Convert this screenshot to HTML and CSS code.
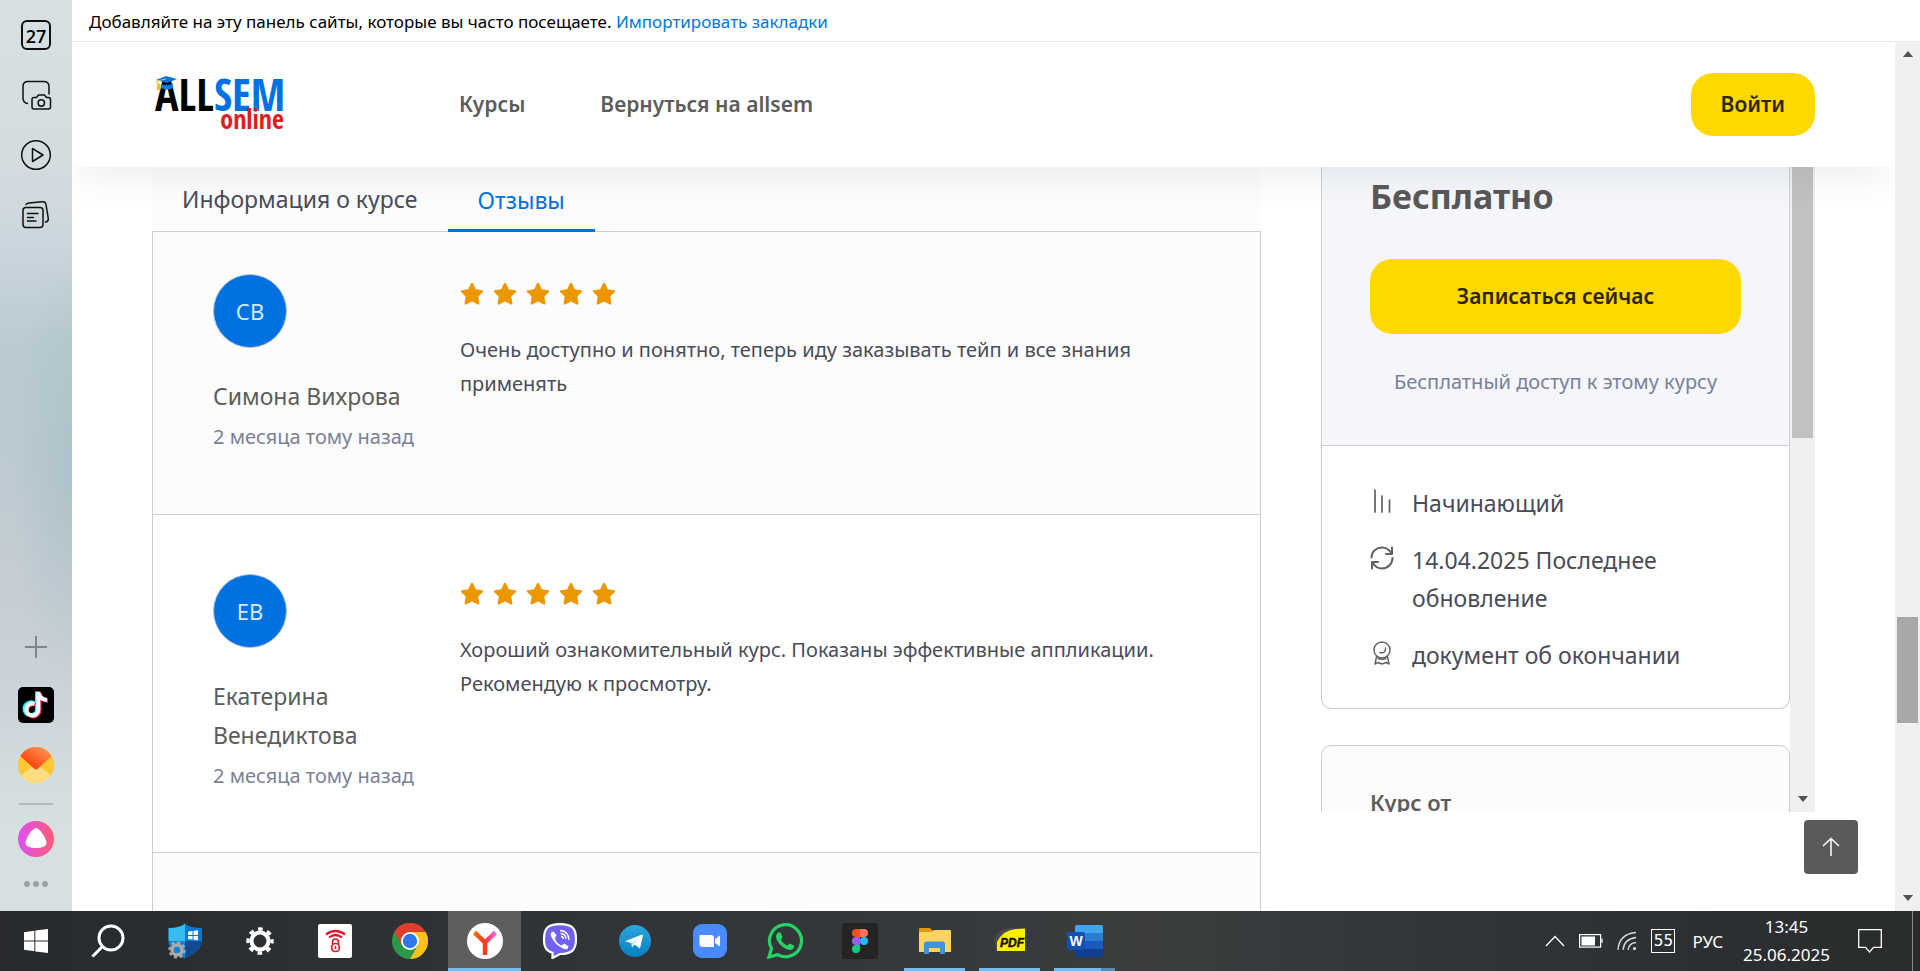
FILE: index.html
```html
<!DOCTYPE html>
<html lang="ru">
<head>
<meta charset="utf-8">
<title>ALLSEM online — Отзывы</title>
<link rel="stylesheet" href="styles.css">
</head>
<body>
<div class="desktop">
  <div class="browser">
    <aside class="sidebar" aria-label="Панель браузера">
      <button class="side-btn" aria-label="Вкладки"><span class="tab-count">27</span></button>
      <button class="side-btn" aria-label="Скриншот">
        <svg width="32" height="32" viewBox="0 0 32 32" fill="none" stroke="#111" stroke-width="1.5" stroke-linecap="round" stroke-linejoin="round"><path d="M7.5 24.5C4.500 24 3 22 3 19V7.500C3 4.500 5 2.500 8 2.500H23.500C27 2.500 29 4.500 29 7.500V15"/><path d="M14 18.500H16.500L18.500 16H24.500L26.500 18.500H28.500A2 2 0 0 1 30.500 20.500V28A2 2 0 0 1 28.500 30H14A2 2 0 0 1 12 28V20.500A2 2 0 0 1 14 18.500Z"/><circle cx="21.300" cy="24" r="3.200"/></svg>
      </button>
      <button class="side-btn" aria-label="Видео">
        <svg width="32" height="32" viewBox="0 0 32 32" fill="none" stroke="#111" stroke-width="1.5" stroke-linejoin="round"><circle cx="16" cy="16" r="14.300"/><path d="M12.500 9.500V22.500L23 16Z"/></svg>
      </button>
      <button class="side-btn" aria-label="Коллекции">
        <svg width="32" height="32" viewBox="0 0 32 32" fill="none" stroke="#111" stroke-width="1.5" stroke-linecap="round" stroke-linejoin="round"><rect x="3" y="8.500" width="20" height="20" rx="3"/><path d="M6 5.500C6.500 4.500 7.500 4.300 9 4.100L22 2.800C24.500 2.600 25.700 3.500 26 5.500L28.300 19.500C28.500 21.500 27.500 22.800 25.500 23"/><path d="M7.500 14.500H18M7.500 18.500H13.500M7.500 22H16"/></svg>
      </button>
      <div class="side-bottom">
        <button class="side-btn" aria-label="Добавить"><svg width="24" height="24" viewBox="0 0 24 24" stroke="#7e888b" stroke-width="2"><path d="M12 1V23M1 12H23"/></svg></button>
        <button class="side-btn" aria-label="TikTok">
          <svg width="36" height="36" viewBox="0 0 36 36"><rect width="36" height="36" rx="5"/><g fill="none" stroke-width="4"><path stroke="#25f4ee" d="M16 16A6.500 6.500 0 1 0 19 24V4.500"/><path stroke="#fe2c55" d="M17.500 17.500A6.200 6.200 0 1 0 21.500 23.500V6C22 10.500 25 13.500 30 13.800"/><path stroke="#fff" d="M16.500 17A6 6 0 1 0 20.300 22.700V5C20.800 9.500 24 12.500 29 12.900"/></g></svg>
        </button>
        <button class="side-btn" aria-label="Почта">
          <svg width="36" height="36" viewBox="0 0 36 36"><defs><clipPath id="mc"><circle cx="18" cy="18" r="18"/></clipPath><linearGradient id="mg" x1="0" y1="1" x2="1" y2="0"><stop offset=".3" stop-color="#ff4a12"/><stop offset="1" stop-color="#ffa665"/></linearGradient></defs><g clip-path="url(#mc)"><rect width="36" height="36" fill="#ffc832"/><path d="M0 31L18 16L36 31V36H0Z" fill="#ffdd80"/><path d="M0 7L16 21.500Q18 23.500 20 21.500L36 7V0H0Z" fill="url(#mg)"/></g></svg>
        </button>
        <hr class="side-line">
        <button class="side-btn" aria-label="Алиса">
          <svg width="36" height="36" viewBox="0 0 36 36"><defs><linearGradient id="ag"><stop stop-color="#dd50f0"/><stop offset="1" stop-color="#ff5a78"/></linearGradient></defs><circle cx="18" cy="18" r="18" fill="url(#ag)"/><path d="M18 7C21.500 7 28.500 17.500 28.500 22C28.500 25.500 24 27 18 27S7.500 25.500 7.500 22C7.500 17.500 14.500 7 18 7Z" fill="#fff"/></svg>
        </button>
        <button class="side-btn more" aria-label="Ещё"><svg width="24" height="6" viewBox="0 0 24 6" fill="#9ba1a3"><circle cx="3" cy="3" r="3"/><circle cx="12" cy="3" r="3"/><circle cx="21" cy="3" r="3"/></svg></button>
      </div>
    </aside>

    <div class="window">
      <div class="bookmarks">Добавляйте на эту панель сайты, которые вы часто посещаете. <a href="#">Импортировать закладки</a></div>
      <div class="viewport">
        <div class="page">
          <header class="header">
            <a class="logo" href="#" aria-label="ALLSEM online">
              <svg class="logo-cap" width="22" height="14" viewBox="0 0 22 14"><path d="M1 4L11 0L22 3L12 7Z" fill="#0071e3"/><path d="M6 8L12 9.500L18 7.500V12Q12 15 6 12Z" fill="#0a7be8"/><path d="M2 5V8M3 8L2 14H5V8Z" fill="#f5b82e" stroke="#f5b82e"/><path d="M2 5L11 3" stroke="#f5b82e"/></svg>
              <span class="logo-main">ALL<span class="logo-blue">SEM</span></span>
              <span class="logo-sub">online</span>
            </a>
            <nav class="nav"><a href="#">Курсы</a><a href="#">Вернуться на allsem</a></nav>
            <button class="btn btn-login">Войти</button>
          </header>
          <main class="content">
            <section class="course">
              <div class="tabs" role="tablist">
                <button class="tab" role="tab">Информация о курсе</button>
                <button class="tab tab-active" role="tab" aria-selected="true">Отзывы</button>
              </div>
              <div class="reviews">
                <article class="review review-first">
                  <div class="author"><div class="avatar">СВ</div><div class="name">Симона Вихрова</div><div class="time">2 месяца тому назад</div></div>
                  <div class="review-body"><svg class="stars" width="156" height="24" viewBox="0 0 156 24" fill="#ed9700"><defs><path id="star" d="M12 .8Q12.700 .8 13.200 1.800L15.800 7.300L22 8.200Q24 8.700 22.700 10.200L18.300 14.600L19.400 21.200Q19.500 23 17.900 22.400L12 19.400L6.100 22.400Q4.500 23 4.600 21.200L5.700 14.600L1.300 10.200Q0 8.700 2 8.200L8.200 7.300L10.800 1.800Q11.300 .8 12 .8Z"/></defs><use href="#star"/><use href="#star" x="33"/><use href="#star" x="66"/><use href="#star" x="99"/><use href="#star" x="132"/></svg>
                  <p>Очень доступно и понятно, теперь иду заказывать тейп и все знания применять</p></div>
                </article>
                <article class="review">
                  <div class="author"><div class="avatar">ЕВ</div><div class="name">Екатерина Венедиктова</div><div class="time">2 месяца тому назад</div></div>
                  <div class="review-body"><svg class="stars" width="156" height="24" viewBox="0 0 156 24" fill="#ed9700"><use href="#star"/><use href="#star" x="33"/><use href="#star" x="66"/><use href="#star" x="99"/><use href="#star" x="132"/></svg>
                  <p>Хороший ознакомительный курс. Показаны эффективные аппликации. Рекомендую к просмотру.</p></div>
                </article>
                <article class="review"></article>
              </div>
            </section>
            <aside class="panel">
              <div class="panel-cards">
                <div class="card">
                  <div class="card-top">
                    <div class="price">Бесплатно</div>
                    <button class="btn btn-enroll">Записаться сейчас</button>
                    <div class="access">Бесплатный доступ к этому курсу</div>
                  </div>
                  <ul class="meta">
                    <li><svg width="24" height="24" viewBox="0 0 24 24" fill="none" stroke="#5f6064" stroke-width="1.700" stroke-linecap="round"><path d="M5 1V23M12 7V23M19.500 11V23"/></svg><span>Начинающий</span></li>
                    <li><svg width="24" height="24" viewBox="0 0 24 24" fill="none" stroke="#5f6064" stroke-width="2" stroke-linecap="round" stroke-linejoin="round"><path d="M1.500 11.500C1.500 5.500 6.500 1.500 12 1.500C16.500 1.500 19.500 4 21.500 7.500M22 1.500V8H16M22.500 12C22.500 18 17.500 22.500 12 22.500C7.500 22.500 4.500 20 2.500 16.500M2 22.500V16H8"/></svg><span>14.04.2025 Последнее обновление</span></li>
                    <li><svg width="24" height="24" viewBox="0 0 24 24" fill="none" stroke="#5f6064" stroke-width="1.400" stroke-linecap="round" stroke-linejoin="round"><circle cx="12" cy="9" r="8"/><path d="M15.500 7C16 10.500 13.500 12.500 10 11.500M6.500 15.500L5 23L8 21.500L12 23L16 21.500L19 23L17.500 15.500M8 17.500Q12 19 16 17.500"/></svg><span>документ об окончании</span></li>
                  </ul>
                </div>
                <div class="card card-next"><div class="from">Курс от</div></div>
              </div>
              <div class="scroll scroll-inner"><i class="thumb-inner"></i><i class="arrow-down"></i></div>
            </aside>
          </main>
          <button class="to-top" aria-label="Наверх"><svg width="18" height="20" viewBox="0 0 18 20" fill="none" stroke="#fff" stroke-width="1.5"><path d="M9 1.500V19M1 9L9 1.500L17 9"/></svg></button>
        </div>
        <div class="scroll scroll-page"><i class="arrow-up"></i><i class="thumb-page"></i><i class="arrow-down"></i></div>
      </div>
    </div>
  </div>

  <footer class="taskbar">
    <button class="task task-sys" aria-label="Пуск"><svg width="24" height="24" viewBox="0 0 24 24" fill="#fff"><path d="M0 3.300L10.300 1.800V11.500H0ZM11.300 1.600L24 0V11.500H11.300ZM0 12.500H10.300V22.300L0 20.800ZM11.300 12.500H24V24L11.300 22.400Z"/></svg></button>
    <button class="task task-sys" aria-label="Поиск"><svg width="34" height="34" viewBox="0 0 34 34" fill="none" stroke="#fff" stroke-width="3"><circle cx="20" cy="14" r="12"/><path d="M11.500 22.500L1.500 32.500"/></svg></button>
    <div class="apps">
      <button class="task" aria-label="Безопасность"><svg width="36" height="36" viewBox="0 0 36 36"><path d="M18 .5C14 4 8 5 1.500 5V18H18Z" fill="#33bdf0"/><path d="M18 .5C22 4 28 5 35 5V18H18Z" fill="#0a78d4"/><path d="M1.500 18C2 26 9 32 18 35.500V18Z" fill="#1183d9"/><path d="M35 18C34.500 26 27 32 18 35.500V18Z" fill="#114b92"/><path d="M21 8.700L25.500 8V12H21ZM26.500 7.900L31 7.300V12H26.500ZM21 13H25.500V16.500L21 16ZM26.500 13H31V17.200L26.500 16.700Z" fill="#fff"/><circle cx="10" cy="27" r="7.500" fill="none" stroke="#a8a8a8" stroke-width="2.500" stroke-dasharray="3 2.900"/><circle cx="10" cy="27" r="5" fill="none" stroke="#aaa" stroke-width="3.500"/></svg></button>
      <button class="task" aria-label="Параметры"><svg width="30" height="30" viewBox="0 0 30 30" fill="none" stroke="#fff"><circle cx="15" cy="15" r="8.500" stroke-width="4"/><circle cx="15" cy="15" r="12" stroke-width="3.400" stroke-dasharray="4.700 4.720" stroke-dashoffset="2.300"/></svg></button>
      <button class="task" aria-label="VPN"><svg width="34" height="34" viewBox="0 0 34 34"><rect width="34" height="34" rx="2" fill="#fff"/><g fill="none" stroke="#e3142b" stroke-width="2.200"><path d="M8 10.500Q17.500 3.500 27 10.500M11 13.500Q17.500 8.500 24 13.500"/><rect x="13.700" y="19.500" width="7.600" height="8" rx="3.500" stroke-width="1.700"/><path d="M14.500 20V18A3 3 0 0 1 20.500 18V20M17.500 22V25" stroke-width="1.600"/></g></svg></button>
      <button class="task" aria-label="Chrome"><svg width="36" height="36" viewBox="0 0 36 36"><circle cx="18" cy="18" r="18" fill="#2b9a48"/><path d="M2.400 9A18 18 0 0 1 33.600 9L18 9L10.200 22.500Z" fill="#e33b2e"/><path d="M33.600 9A18 18 0 0 1 18 36L25.800 22.500L18 9Z" fill="#fcc21b"/><circle cx="18" cy="18" r="9" fill="#fff"/><circle cx="18" cy="18" r="7.200" fill="#2f76ea"/></svg></button>
      <button class="task task-current" aria-label="Яндекс Браузер"><svg width="36" height="36" viewBox="0 0 36 36"><defs><linearGradient id="yg"><stop stop-color="#ff6a00"/><stop offset=".5" stop-color="#f8382a"/><stop offset="1" stop-color="#ff60e8"/></linearGradient></defs><circle cx="18" cy="18" r="18" fill="#fff"/><path d="M7.500 9.500L18 19.500L28.500 9.500" stroke="url(#yg)" stroke-width="4.500" fill="none"/><path d="M18 18V32" stroke="#f83c22" stroke-width="4.500"/></svg></button>
      <button class="task" aria-label="Viber"><svg width="36" height="36" viewBox="0 0 36 36"><path d="M18 1.200C30 1.200 34 5 34 16S30 31 18 31L10.500 35V29.800C4 28 2 24 2 16C2 5 6 1.200 18 1.200Z" fill="#7360f2" stroke="#fff" stroke-width="2.200"/><path d="M11.500 8.500L14.500 12L13 15.500C14 19 16 21 19.500 22.500L22.500 20.500L26.500 23.500Q26 27 22.500 26C15 23 10 17.500 8.500 11Q9 8.500 11.500 8.500Z" fill="#fff"/><path d="M18 7.500Q26.500 8 27 17M18.500 10.500Q24 11 24 16M19 13.500Q21.500 13.500 21.500 16" fill="none" stroke="#fff" stroke-width="1.300"/></svg></button>
      <button class="task" aria-label="Telegram"><svg width="32" height="32" viewBox="0 0 32 32"><defs><linearGradient id="tg" x2="0" y2="1"><stop stop-color="#2ba6df"/><stop offset="1" stop-color="#087fc0"/></linearGradient></defs><circle cx="16" cy="16" r="16" fill="url(#tg)"/><path d="M6 16.200L23 9.600Q24 9.500 23.800 11L21 23.500L15.500 19.500L13 22.500L12.500 18.300Z" fill="#fff"/><path d="M12.500 18.300L20.500 12.500L14 19L13 22.500Z" fill="#b9d9ea"/></svg></button>
      <button class="task" aria-label="Zoom"><svg width="34" height="34" viewBox="0 0 34 34"><rect width="34" height="34" rx="9" fill="#4a8cff"/><path d="M6.500 11H18Q21 11 21 14V23H9.500Q6.500 23 6.500 20ZM22 15L27 11.500V22.500L22 19Z" fill="#fff"/></svg></button>
      <button class="task" aria-label="WhatsApp"><svg width="36" height="36" viewBox="0 0 36 36"><path d="M2 34L4.500 25.500A16 16 0 1 1 10.500 31.600Z" fill="none" stroke="#25d366" stroke-width="3.200"/><path d="M11 9.500H13.500L15.500 14L14 17C15.500 19.500 17.500 21.500 20.500 22.500L22.500 20.500L27 22.500Q27.500 26 23.500 27C18 27 9.500 20 9 14Q9 11 11 9.500Z" fill="#25d366"/></svg></button>
      <button class="task" aria-label="Figma"><svg width="36" height="36" viewBox="0 0 36 36"><rect width="36" height="36" rx="3" fill="#242424"/><path d="M18 6H14A4 4 0 0 0 14 14H18Z" fill="#f24e1e"/><path d="M18 6H22A4 4 0 0 1 22 14H18Z" fill="#ff7262"/><path d="M18 14H14A4 4 0 0 0 14 22H18Z" fill="#a259ff"/><circle cx="22" cy="18" r="4" fill="#1abcfe"/><path d="M18 22H14A4 4 0 1 0 18 26Z" fill="#0acf83"/></svg></button>
      <button class="task task-open" aria-label="Проводник"><svg width="32" height="28" viewBox="0 0 32 28"><path d="M0 2Q0 1 1 1H11L14 4V8H0Z" fill="#dc9a0b"/><path d="M0 5H12L15 3H31Q32 3 32 4V25H0Z" fill="#ffd35c"/><path d="M5 27V17Q5 14.500 7.500 14.500H24Q26 14.500 26 17V27H21V21H10V27Z" fill="#3b95dc"/></svg></button>
      <button class="task task-open task-pdf" aria-label="PDF"><svg width="32" height="26" viewBox="0 0 32 26"><path d="M0 13Q4 1 17 1L31 2V24H2Z" fill="#4a4a4a"/><path d="M3 24V15Q9 3 22 2L31 1.500V24Z" fill="#fff000"/><text x="18" y="20" text-anchor="middle" class="pdf-text">PDF</text></svg></button>
      <button class="task task-open task-multi" aria-label="Word"><svg width="36" height="34" viewBox="0 0 36 34"><path d="M8 3Q8 1 10 1H34Q36 1 36 3V9H8Z" fill="#41a5ee"/><path d="M8 9H36V17H8Z" fill="#2b7cd3"/><path d="M8 17H36V25H8Z" fill="#185abd"/><path d="M8 25H36V31Q36 33 34 33H10Q8 33 8 31Z" fill="#103f91"/><rect y="8" width="18" height="18" rx="2" fill="#1450b4"/><text x="9" y="22" text-anchor="middle" class="word-text">W</text></svg></button>
    </div>
    <div class="tray">
      <svg width="20" height="12" viewBox="0 0 20 12" fill="none" stroke="#fff" stroke-width="1.300"><path d="M1 11L10 1.500L19 11"/></svg>
      <svg width="24" height="14" viewBox="0 0 24 14" fill="none" stroke="#fff" stroke-width="1.200"><rect x=".6" y=".6" width="21" height="12.500"/><path d="M2.500 2.500H16V11.500H2.500Z" fill="#fff" stroke="none"/><path d="M23 4.500V9"/></svg>
      <svg width="20" height="20" viewBox="0 0 20 20" fill="none" stroke="#ddd" stroke-width="1.300"><path d="M1 19Q2 3 19 1.500M6 19Q7 8 19 6.500M11 19Q12 12 19 11.500"/><circle cx="17.500" cy="17.500" r="1.500" fill="#fff" stroke="none"/></svg>
      <span class="temp">55</span>
      <span class="lang">РУС</span>
      <time class="clock"><span>13:45</span><span>25.06.2025</span></time>
      <svg class="note" width="24" height="26" viewBox="0 0 24 26" fill="none" stroke="#fff" stroke-width="1.300"><path d="M.7 1.700H23.300V19.300H15.500L11.500 24L7.500 19.300H.7Z"/></svg>
      <i class="peek"></i>
    </div>
  </footer>
</div>
</body>
</html>
```
FILE: styles.css
```css
* { box-sizing: border-box; }
body { margin: 0; font-family: "Noto Sans", "Open Sans", sans-serif; color: #4a4b57; background: #fff; }
button { font: inherit; border: 0; padding: 0; background: none; color: inherit; cursor: pointer; }
a { text-decoration: none; color: inherit; }
svg { display: block; flex: none; }

.desktop { display: flex; flex-direction: column; height: 100vh; overflow: hidden; }
.browser { display: flex; flex: 1; min-height: 0; }

.sidebar { flex: none; width: 72px; display: flex; flex-direction: column; align-items: center; padding: 19px 0 24px; gap: 28px; background: radial-gradient(60px 220px at 100% 52%, rgba(165, 188, 198, .6), transparent), linear-gradient(#d8e0e2, #d3dde0 18%, #cbd5dd 27%, #b9cbd1 38%, #bccad1 50%, #c6ced4 65%, #ccd5d9 78%, #d7e0e1 90%); }
.side-btn { display: flex; align-items: center; justify-content: center; min-height: 32px; }
.side-bottom { margin-top: auto; display: flex; flex-direction: column; align-items: center; gap: 24px; }
.tab-count { width: 30px; height: 30px; border: 2px solid #111; border-radius: 6px; font: 600 18px/28px "Open Sans", sans-serif; color: #000; }
.side-line { width: 34px; height: 2px; margin: -4px 0 -8px; border: 0; background: #b3babc; }
.more { min-height: 6px; }

.window { flex: 1; min-width: 0; display: flex; flex-direction: column; }
.bookmarks { flex: none; height: 42px; padding: 0 17px; border-bottom: 1px solid #ebebeb; font-size: 17px; line-height: 44px; color: #000; white-space: nowrap; }
.bookmarks a { color: #0078dc; }
.viewport { flex: 1; min-height: 0; display: flex; }
.page { position: relative; flex: 1; min-width: 0; display: flex; flex-direction: column; overflow: hidden; }

.header { position: relative; z-index: 1; flex: none; display: flex; align-items: center; height: 125px; padding: 0 80px; background: #fff; box-shadow: 0 20px 30px -8px rgba(50, 65, 80, .08); }
.logo { position: relative; width: 307px; padding: 0 0 3px 3px; color: #000; font-family: "Open Sans Condensed", "Roboto Condensed", "Liberation Sans Narrow", Roboto, sans-serif; font-weight: 700; }
.logo-main { display: block; font-size: 44px; line-height: 32px; }
.logo-blue { color: #0071e3; }
.logo-sub { display: block; width: 129px; text-align: right; font-size: 26px; line-height: 18px; color: #dc1e1e; }
.logo-cap { position: absolute; left: 3px; top: -2px; }
.nav { display: flex; gap: 75px; padding-bottom: 2px; font-size: 21px; font-weight: 600; color: #5c5c5c; }
.btn { border-radius: 22px; background: #ffd800; color: #2d230a; font-size: 21px; font-weight: 600; }
.btn-login { margin-left: auto; padding: 16px 30px; line-height: 31px; }

.content { flex: 1; min-height: 0; display: flex; gap: 60px; padding: 0 80px; }
.course { flex: 1; min-width: 0; }
.tabs { position: relative; display: flex; background: #fcfcfd; }
.tab { padding: 13px 30px; font-size: 23px; line-height: 38px; }
.tab-active { margin-bottom: -1px; color: #0071e3; box-shadow: inset 0 -3px #0071e3; }
.reviews { border: 1px solid #cbcdd4; }
.review { display: flex; min-height: 120px; padding: 59px 59px 59px 60px; }
.review:nth-child(odd) { background: #fcfcfd; }
.review + .review { border-top: 1px solid #cbcdd4; }
.review-first { padding-top: 42px; padding-bottom: 60px; }
.author { flex: none; width: 247px; padding-right: 40px; }
.avatar { width: 74px; height: 74px; border: 1px solid #b9c3d2; border-radius: 50%; background: #0071e0; color: #d6eafc; font-size: 22px; line-height: 72px; text-align: center; }
.name { margin-top: 29px; font-size: 23px; line-height: 39px; color: #5c5c5c; }
.time { margin-top: 4px; font-size: 20px; line-height: 34px; color: #7a8196; white-space: nowrap; }
.review-body { flex: 1; min-width: 0; padding-top: 8px; }
.review-body p { margin: 27px 0 0; font-size: 20px; line-height: 34px; }

.panel { flex: none; display: flex; width: 494px; max-height: 645px; overflow: hidden; }
.panel-cards { flex: 1; min-width: 0; }
.card { border: 1px solid #cbcdd4; border-radius: 0 0 10px 10px; border-top: 0; }
.card-top { padding: 0 48px 46px; background: #f4f6fb; border-bottom: 1px solid #cbcdd4; text-align: center; }
.price { padding-top: 4px; font-size: 34px; font-weight: 700; line-height: 50px; color: #585858; text-align: left; }
.btn-enroll { width: 100%; margin-top: 38px; line-height: 75px; }
.access { margin-top: 31px; font-size: 20px; line-height: 34px; color: #7a8196; white-space: nowrap; }
.meta { margin: 0; padding: 38px 48px 34px; list-style: none; display: grid; gap: 19px; font-size: 23px; line-height: 38px; }
.meta li { display: flex; gap: 18px; }
.meta svg { margin-top: 5px; }
.card-next { margin-top: 36px; padding: 38px 48px; border-top: 1px solid #cbcdd4; border-radius: 10px 10px 0 0; background: #fcfcfd; }
.from { font-size: 22px; font-weight: 600; line-height: 37px; color: #5c5c5c; }

.scroll { flex: none; width: 25px; display: flex; flex-direction: column; align-items: center; background: #f0f0f0; }
.thumb-inner { width: 21px; flex: 0 0 42%; background: #c1c1c1; }
.thumb-page { width: 21px; flex: 0 0 106px; margin-top: 560px; background: #a8a8a8; }
.arrow-up { margin-top: 9px; border: 5px solid transparent; border-top: 0; border-bottom: 6px solid #505050; }
.arrow-down { margin: auto 0 10px; border: 5px solid transparent; border-bottom: 0; border-top: 6px solid #505050; }
.to-top { position: absolute; right: 37px; bottom: 37px; width: 54px; height: 54px; display: grid; place-items: center; border-radius: 4px; background: #5a5a5a; }

.taskbar { flex: none; display: flex; height: 60px; background: linear-gradient(90deg, #282a2c, #2c3033 15%, #34383a 45%, #3b3d3e 60%, #303437 78%, #292b2c); color: #fff; }
.task { width: 73px; display: flex; align-items: center; justify-content: center; }
.task-sys { width: 72px; }
.apps { display: flex; gap: 2px; margin-left: 4px; }
.task-current { background: #5c5e60; box-shadow: inset 0 -3px #76b9ed; }
.task-open { background: linear-gradient(#76b9ed, #76b9ed) center bottom / 61px 3px no-repeat; }
.task-pdf { padding-bottom: 2px; }
.task-multi { background: linear-gradient(90deg, #76b9ed 47px, #5a8ab0 47px) center bottom / 61px 3px no-repeat; }
.pdf-text { font: italic 700 12px "Liberation Sans", sans-serif; fill: #111; stroke: #111; stroke-width: .4px; }
.word-text { font: 700 14px "Liberation Sans", sans-serif; fill: #fff; }
.tray { margin-left: auto; display: flex; align-items: center; gap: 14px; font-size: 17px; }
.temp { width: 24px; height: 24px; border: 1px solid #fff; font: 16px/22px "DejaVu Sans Mono", monospace; text-align: center; }
.lang { margin: 0 6px 0 3px; font-size: 17px; }
.clock { display: flex; flex-direction: column; align-items: center; line-height: 28px; }
.note { margin-left: 14px; }
.peek { align-self: stretch; width: 1px; margin: 0 7px 0 16px; background: #8a8a8a; }
```
